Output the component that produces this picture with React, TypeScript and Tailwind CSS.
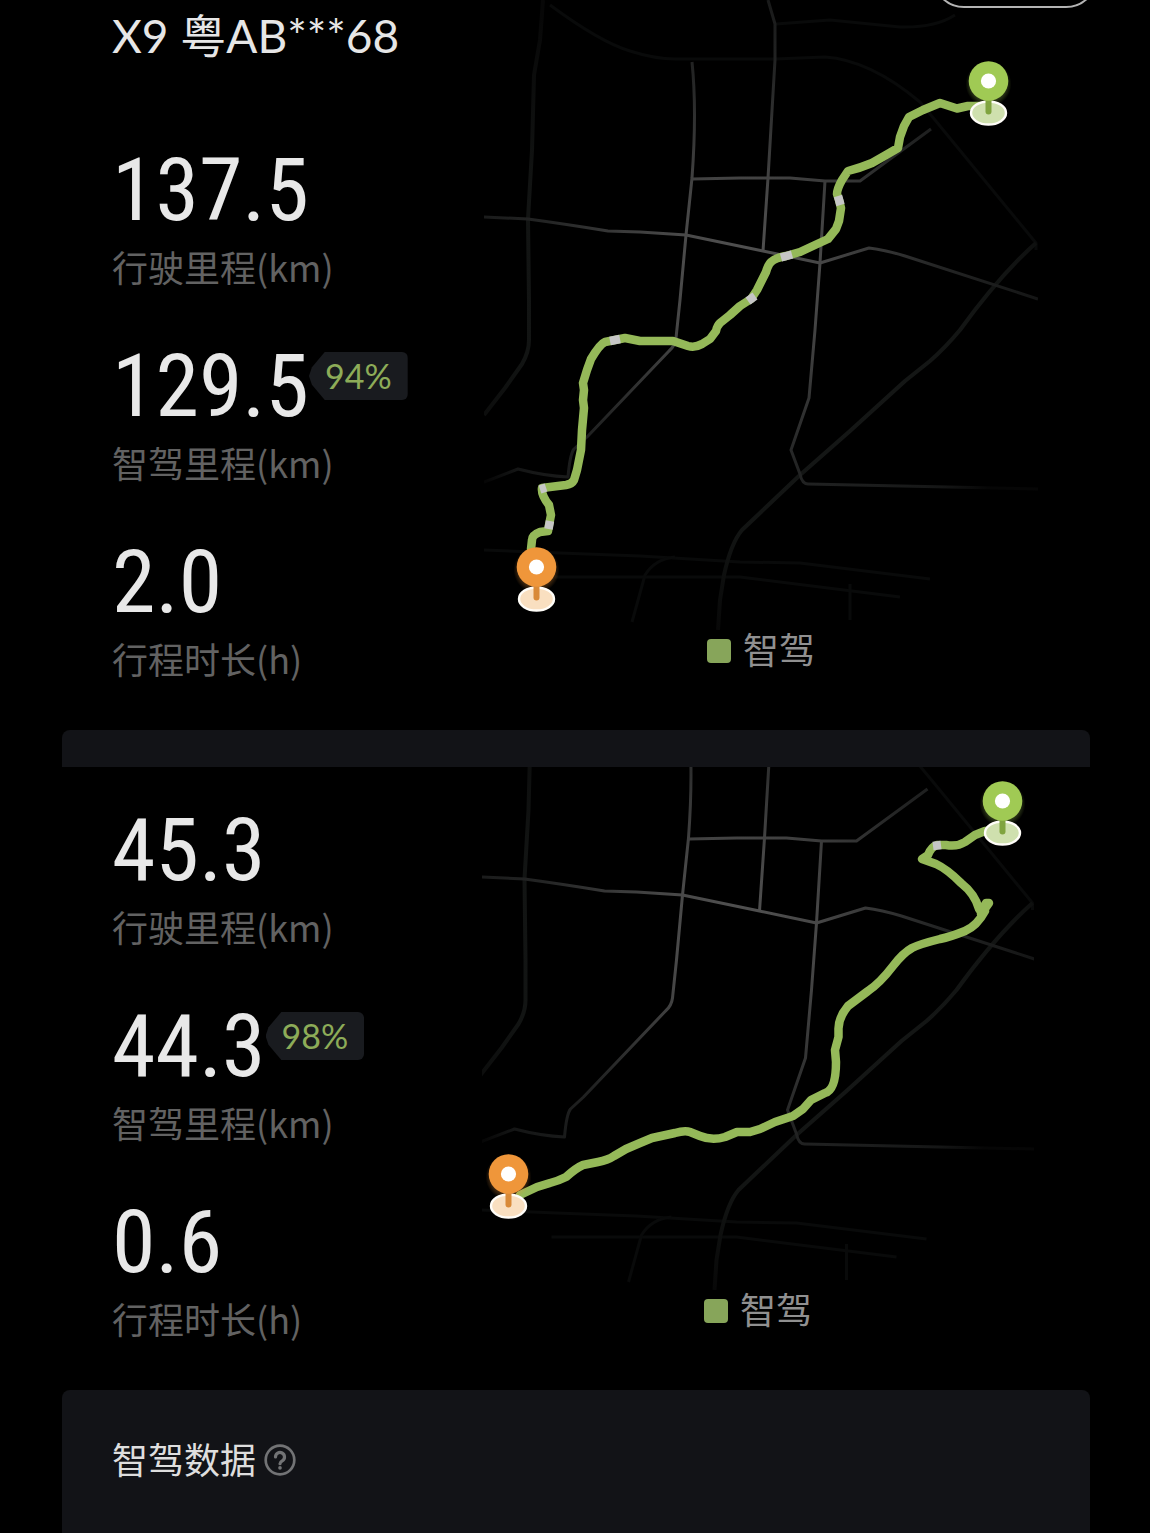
import { useId } from 'react';

type Stat = { value: string; label: string; badge?: string };

const latin = 'font-["Lato","Noto_Sans_CJK_SC",sans-serif]';

function Badge({ text }: { text: string }) {
  return (
    <span
      className={
        latin +
        ' mt-2 flex h-12 items-center rounded-md bg-[#191b1f] px-4 text-[34px] leading-none text-[#8dac58] [clip-path:polygon(16%_0,100%_0,100%_100%,16%_100%,3%_68%,0_50%,3%_32%)]'
      }
    >
      {text}
    </span>
  );
}

function Stats({ items }: { items: Stat[] }) {
  return (
    <dl className="flex flex-col gap-[58px]">
      {items.map((s) => (
        <div key={s.label} className="flex flex-col-reverse gap-[18px]">
          <dt className="h-10 text-[36px] leading-10 whitespace-nowrap text-[#626262]">{s.label}</dt>
          <dd className="flex h-20 items-start text-[#e8e8e8]">
            <span className='font-["Roboto_Condensed","Roboto",sans-serif] text-[88px] leading-[84px]'>{s.value}</span>
            {s.badge && <Badge text={s.badge} />}
          </dd>
        </div>
      ))}
    </dl>
  );
}

function Pin({ x, y, color, stem, base }: { x: number; y: number; color: string; stem: string; base: string }) {
  const id = useId();
  return (
    <g>
      <radialGradient id={id}>
        <stop offset="0.7" stopColor={color} stopOpacity="0.35" />
        <stop offset="1" stopColor={color} stopOpacity="0" />
      </radialGradient>
      <circle cx={x} cy={y + 3} r="23" fill={`url(#${id})`} />
      <ellipse cx={x} cy={y + 32} rx="17.5" ry="11.5" fill={base} stroke="#fffdf8" strokeWidth="2.4" />
      <path d={`M${x} ${y + 16}V${y + 30.5}`} stroke={stem} strokeWidth="6" strokeLinecap="round" />
      <circle cx={x} cy={y} r="19.8" fill={color} />
      <circle cx={x} cy={y} r="7.6" fill="#fff" />
    </g>
  );
}

const ROADS = [
  'M484 217L528 219Q565 224 608 231L640 232L686 235L763 251L820 263L869 248Q885 250 905 256L1038 299',
  'M692 62Q697 110 692 178L686 235L680 300L676 338Q675 346 669 351L587 437L574 449Q570 454 568 477Q545 476 518 469L484 482',
  'M768 0L775 24V60L768 178L763 251',
  'M692 179L740 178L790 178L825 181H860L931 129',
  'M825 181L820 263L815 330L809 398L791 450L800 474Q802 484 808 484L1038 489',
];
const HIGHWAYS = [
  'M543 0L540 40L534 75L532 150L528 219L529 300V340Q529 352 522 364L505 388L484 415',
  'M1036 243Q1000 275 960 330Q945 348 930 361L905 381L850 431L800 475L742 530Q731 543 724 575L720 600L718 630',
];
const FAINT = [
  'M484 550L560 553L640 556L740 562L800 563L930 579',
  'M555 577H740L900 597',
  'M632 622L645 575Q655 559 675 557',
  'M850 584V620',
  'M550 5Q600 42 630 51Q655 59 675 59H775L825 57Q870 60 920 102L935 120L1036 243V250',
  'M776 24L830 20L900 27Q935 28 955 15',
];

function Roads({ dx = 0, dy = 0 }: { dx?: number; dy?: number }) {
  const id = useId();
  return (
    <g transform={`translate(${dx} ${dy})`} fill="none" strokeLinejoin="round">
      <radialGradient id={id} gradientUnits="userSpaceOnUse" cx="740" cy="270" r="330">
        <stop offset="0" stopColor="#525252" />
        <stop offset="0.25" stopColor="#464646" />
        <stop offset="0.6" stopColor="#242525" />
        <stop offset="0.9" stopColor="#151616" />
        <stop offset="1" stopColor="#060606" />
      </radialGradient>
      <radialGradient id={id + 'f'} gradientUnits="userSpaceOnUse" cx="760" cy="290" r="350">
        <stop offset="0" stopColor="#191b1a" />
        <stop offset="0.7" stopColor="#121413" />
        <stop offset="1" stopColor="#070707" />
      </radialGradient>
      {FAINT.map((d) => (
        <path key={d} d={d} stroke="#090a0a" strokeWidth="3" />
      ))}
      {HIGHWAYS.map((d) => (
        <path key={d} d={d} stroke={`url(#${id}f)`} strokeWidth="4" />
      ))}
      {ROADS.map((d) => (
        <path key={d} d={d} stroke={`url(#${id})`} strokeWidth="3" />
      ))}
    </g>
  );
}

function Route({ d, manual }: { d: string; manual: string[] }) {
  return (
    <g fill="none" strokeWidth="8.5" strokeLinejoin="round">
      <path d={d} stroke="#95b959" strokeLinecap="round" />
      {manual.map((m) => (
        <path key={m} d={m} stroke="#c6c6c6" />
      ))}
    </g>
  );
}

function Legend() {
  return (
    <div className="flex h-10 items-start justify-center gap-3 text-[36px] leading-9 text-[#909090]">
      <span className="mt-[9px] size-6 rounded-sm bg-[#87a55a]" />
      <span>智驾</span>
    </div>
  );
}

export default function App() {
  return (
    <main className='relative min-h-screen overflow-hidden bg-black font-["Noto_Sans_CJK_SC",sans-serif]'>
      <button
        type="button"
        aria-label="更多"
        className="absolute -top-14 right-13 h-16 w-[166px] rounded-full border-2 border-[#b4b4b4]"
      />

      <section className="grid grid-cols-[372px_1fr] px-28 pb-[52px]">
        <div>
          <h1 className={latin + ' mb-[76px] h-[72px] text-[46px] leading-[72px] whitespace-nowrap text-[#e6e6e6]'}>
            X9 粤AB***68
          </h1>
          <Stats
            items={[
              { value: '137.5', label: '行驶里程(km)' },
              { value: '129.5', label: '智驾里程(km)', badge: '94%' },
              { value: '2.0', label: '行程时长(h)' },
            ]}
          />
        </div>
        <div>
          <svg viewBox="484 0 554 630" className="h-auto w-full" role="img" aria-label="行程路线">
            <Roads />
            <Route
              d="M988 106H968L957 108.500L940 103L923 110L909 117L904 126L900 137L898 148L886 155L872 163Q860 168 848 171L842 180Q837 189 837 194L839 200L841 208L839 221L836 229L828 239L815 245L800 252L786 256Q775 258 771 262Q768 265 766 272L757 290L751 299L740 306L730 315L720 323Q717 326 716 331L710 339L702 344Q695 348 688 346L673 341L650 341L640 341L625 338L615 340L605 342Q600 344 591 359L587 370L583 383L584 390L583 400L584 408L582 430L581 450L577 470L574 480Q572 484 566 485L542 488Q541 495 549 505L551 515L549 525L548 531L540 532Q532 535 532 540L531 549"
              manual={['M838 196L840.500 205', 'M781 257.500L792 254.500', 'M748 301L755 296', 'M610 341L620 339', 'M546 487.500L540 489.500', 'M550 521L548.500 529']}
            />
            <Pin x={988.5} y={81} color="#a0ca54" stem="#80a43f" base="#cfe0ae" />
            <Pin x={536.5} y={567} color="#ef963a" stem="#d98a38" base="#f9dfc0" />
          </svg>
          <Legend />
        </div>
      </section>

      <div className="mr-[60px] ml-[62px] h-[37px] rounded-t-lg bg-[#121317]" />

      <section className="grid grid-cols-[370px_1fr] pr-29 pb-[52px] pl-28">
        <div className="pt-[41px]">
          <Stats
            items={[
              { value: '45.3', label: '行驶里程(km)' },
              { value: '44.3', label: '智驾里程(km)', badge: '98%' },
              { value: '0.6', label: '行程时长(h)' },
            ]}
          />
        </div>
        <div>
          <svg viewBox="482 767 552 523" className="h-auto w-full" role="img" aria-label="行程路线">
            <Roads dx={-3.5} dy={660} />
            <Route
              d="M1000 830L985 831L975 835L965 842Q957 847 946 845L937 845Q931 847 928 855L922 859L936 864Q947 869 961 883Q975 894 979 909L981 912L986 903H989L984 910L981 914L985 911Q977 926 965 931Q950 937 940 939Q920 944 912 948Q903 953 893 966Q880 983 868 991L848 1006Q838 1018 838.500 1030V1037L835 1050L836 1062Q836 1090 825 1093L811 1100L803 1109L793 1116L775 1122L760 1129L750 1132H737L725 1137Q712 1141 700 1136L690 1132Q685 1130 675 1133L652 1138L640 1143L626 1149L614 1156Q608 1160 598 1162L583 1165Q576 1168 566 1177Q558 1181 550 1183L537 1187L520 1195"
              manual={['M933 846L941 845']}
            />
            <Pin x={1002.5} y={801} color="#a0ca54" stem="#80a43f" base="#cfe0ae" />
            <Pin x={508.5} y={1174} color="#ef963a" stem="#d98a38" base="#f9dfc0" />
          </svg>
          <Legend />
        </div>
      </section>

      <section className="mr-[60px] ml-[62px] flex min-h-[143px] items-start gap-2 rounded-t-lg bg-[#121317] px-[50px] pt-12">
        <h2 className="text-[36px] leading-10 text-[#dedede]">智驾数据</h2>
        <button type="button" aria-label="说明" className="mt-1.5 text-[#727375]">
          <svg viewBox="0 0 32 32" className="size-8" fill="none" stroke="currentColor" strokeLinecap="round">
            <circle cx="16" cy="16" r="14.300" strokeWidth="2.700" />
            <path d="M11.500 13a4.500 4.500 0 1 1 7 3.700c-1.700 1-2.500 1.600-2.500 3" strokeWidth="3.200" />
            <path d="M16 23.800v.1" strokeWidth="3.600" />
          </svg>
        </button>
      </section>
    </main>
  );
}
